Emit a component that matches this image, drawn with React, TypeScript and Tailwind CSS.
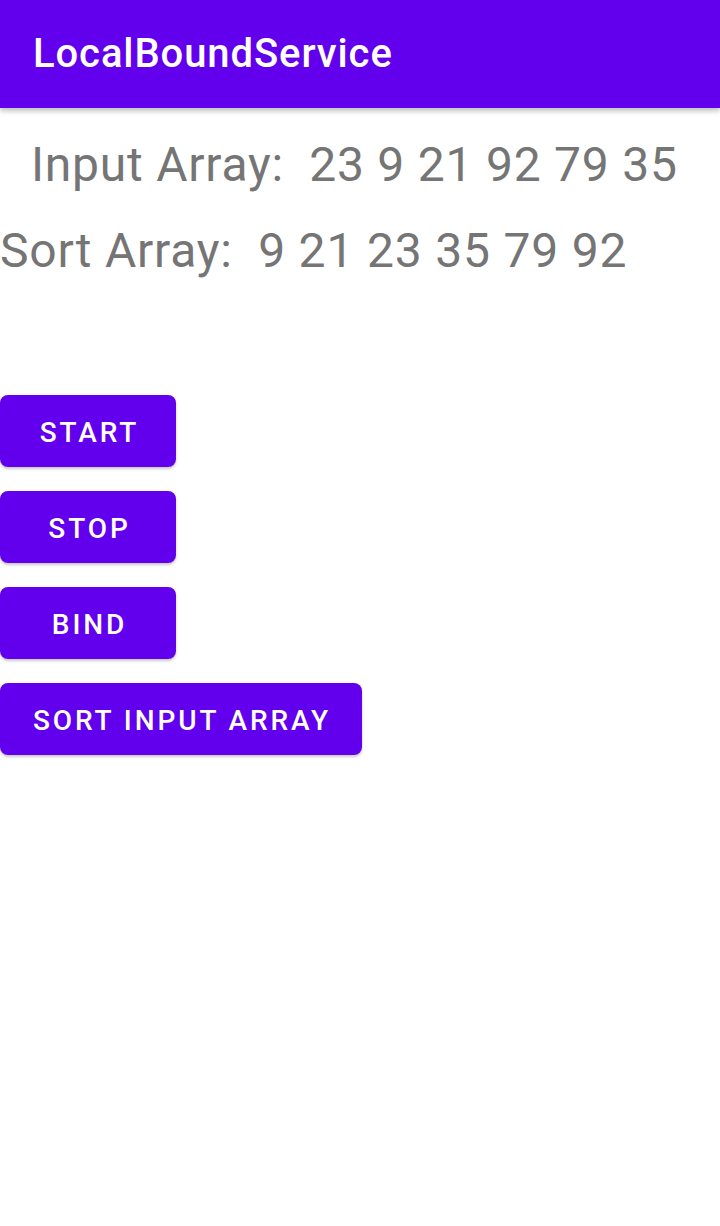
import React from "react";

function Btn({ label, wide }: { label: string; wide?: boolean }) {
  return (
    <button
      className={
        wide
          ? "h-[72px] pl-[33px] pr-[31px] pt-[3px] rounded-[8px] bg-[#6200EE] text-white text-[28px] font-medium tracking-[2.9px] leading-none shadow-[0_2px_3px_rgba(0,0,0,0.22)] flex items-center justify-center"
          : "h-[72px] w-[176px] pl-[3px] pt-[3px] rounded-[8px] bg-[#6200EE] text-white text-[28px] font-medium tracking-[2.9px] leading-none shadow-[0_2px_3px_rgba(0,0,0,0.22)] flex items-center justify-center"
      }
    >
      {label}
    </button>
  );
}

export default function App() {
  return (
    <div className="w-[720px] h-[1226px] bg-white font-['Roboto',_'Liberation_Sans',_sans-serif] overflow-hidden">
      <header className="relative z-10 h-[108px] bg-[#6200EE] flex items-center pl-[33px] shadow-[0_3px_5px_rgba(0,0,0,0.25)]">
        <h1 className="text-[40px] font-medium text-white leading-none tracking-[0.9px]">LocalBoundService</h1>
      </header>
      <div className="pt-[29px]">
        <p className="ml-[31px] text-[48px] leading-[56px] text-[#757575] whitespace-pre tracking-[0.77px]">
          {"Input Array:  23 9 21 92 79 35"}
        </p>
        <p className="mt-[30px] text-[48px] leading-[56px] text-[#757575] whitespace-pre tracking-[0.8px]">
          {"Sort Array:  9 21 23 35 79 92"}
        </p>
        <div className="mt-[116px] flex flex-col items-start gap-[24px]">
          <Btn label="START" />
          <Btn label="STOP" />
          <Btn label="BIND" />
          <Btn label="SORT INPUT ARRAY" wide />
        </div>
      </div>
    </div>
  );
}
